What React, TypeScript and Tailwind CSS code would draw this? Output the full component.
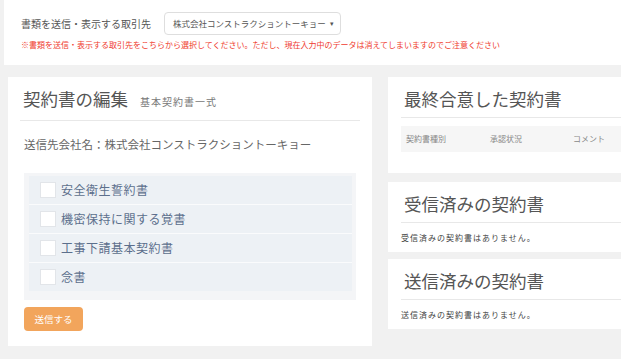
const docs = ['安全衛生誓約書', '機密保持に関する覚書', '工事下請基本契約書', '念書'];

function Heading({ title, sub }: { title: string; sub?: string }) {
  return (
    <div className="border-b border-[#e8e8e8] pt-3 pb-2">
      <h2 className="flex items-baseline pl-[3px] text-[17.5px] leading-[20px] text-[#555]">
        {title}
        {sub && <span className="ml-3 text-[10px] tracking-[1px] text-[#777]">{sub}</span>}
      </h2>
    </div>
  );
}

function EmptyPanel({ title, message }: { title: string; message: string }) {
  return (
    <div className="bg-white pl-[13px] pb-[8px]">
      <Heading title={title} />
      <p className="mt-[9px] text-[8px] leading-[12px] tracking-[1px] text-[#444]">{message}</p>
    </div>
  );
}

export default function App() {
  return (
    <div className="h-[359px] w-full overflow-hidden bg-[#f1f1f1] pl-[4px] font-['Noto_Sans_CJK_JP',sans-serif]">
      <div className="h-[65px] bg-white pl-[17px] pt-[12px]">
        <div className="flex items-center gap-[13px]">
          <span className="text-[10px] text-[#555]">書類を送信・表示する取引先</span>
          <div className="flex h-[23px] w-[177px] items-center rounded-sm border border-[#dedede] pl-2 text-[8.5px] text-[#555]">
            株式会社コンストラクショントーキョー
            <span className="ml-1 text-[7px]">▾</span>
          </div>
        </div>
        <p className="mt-[4px] text-[8px] leading-[12px] text-[#ef3b2e]">
          ※書類を送信・表示する取引先をこちらから選択してください。ただし、現在入力中のデータは消えてしまいますのでご注意ください
        </p>
      </div>

      <div className="flex gap-4 pl-[4px] pt-[12px]">
        <div className="w-[364px] shrink-0 bg-white px-3 pb-[15px]">
          <Heading title="契約書の編集" sub="基本契約書一式" />
          <p className="mt-[15px] pl-1 text-[11.5px] leading-[16px] text-[#666]">
            送信先会社名：株式会社コンストラクショントーキョー
          </p>
          <div className="mx-1 mt-[21px] bg-[#f4f5f7] pb-[9px] pl-[5px] pr-[4px] pt-[3px]">
            <div className="flex flex-col gap-px bg-[#fafbfc]">
              {docs.map((d) => (
                <label key={d} className="flex h-[28px] items-center gap-[5px] bg-[#edf1f5] pl-[11px] text-[12px] tracking-[0.5px] text-[#5c6f8c]">
                  <span className="h-4 w-4 border border-[#e2e5e9] bg-white" />
                  {d}
                </label>
              ))}
            </div>
          </div>
          <button className="ml-1 mt-[7px] h-[24px] w-[59px] rounded-sm bg-[#f2a55c] text-[9.5px] text-white">
            送信する
          </button>
        </div>

        <div className="flex min-w-0 flex-1 flex-col">
          <div className="bg-white pl-[13px] pb-[21px]">
            <Heading title="最終合意した契約書" />
            <div className="mt-[8px] flex h-[26px] items-center bg-[#f6f6f6] text-[8px] text-[#888]">
              <span className="w-[89px] pl-[5px]">契約書種別</span>
              <span className="w-[83px]">承認状況</span>
              <span>コメント</span>
            </div>
          </div>
          <div className="mt-[9px]">
            <EmptyPanel title="受信済みの契約書" message="受信済みの契約書はありません。" />
          </div>
          <div className="mt-[7px]">
            <EmptyPanel title="送信済みの契約書" message="送信済みの契約書はありません。" />
          </div>
        </div>
      </div>
    </div>
  );
}
